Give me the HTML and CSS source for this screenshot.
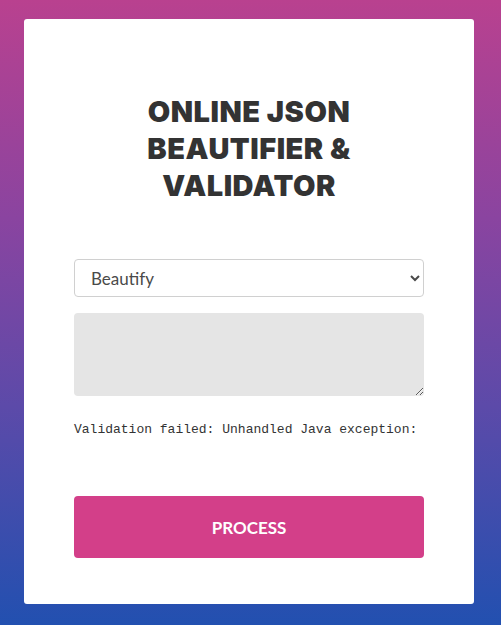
FILE: index.html
```html
<!DOCTYPE html>
<html>
<head>
<meta charset="utf-8">
<link rel="stylesheet" href="styles.css">
</head>
<body>
<main class="card">
  <h1 class="title">ONLINE JSON<br>BEAUTIFIER &amp;<br>VALIDATOR</h1>
  <select class="mode">
    <option>Beautify</option>
    <option>Validate</option>
  </select>
  <textarea class="input"></textarea>
  <p class="message">Validation failed: Unhandled Java exception:</p>
  <button class="process">PROCESS</button>
</main>
</body>
</html>
```
FILE: styles.css
```css
html, body {
  margin: 0;
  height: 625px;
}
body {
  background: linear-gradient(180deg, #b9418f 0%, #8a44a0 35%, #5c4aa9 65%, #2250b0 100%);
  padding: 19px 27px 21px 24px;
  box-sizing: border-box;
  font-family: "Inter", sans-serif;
}
.card {
  background: #fff;
  border-radius: 3px;
  height: 585px;
  box-sizing: border-box;
  padding: 74px 50px 46px;
  display: flex;
  flex-direction: column;
}
.title {
  margin: 0;
  text-align: center;
  font-family: "Inter", sans-serif;
  font-weight: 900;
  font-size: 29px;
  line-height: 37px;
  color: #333;
  letter-spacing: 0.5px;
}
.mode {
  margin-top: 55px;
  height: 38px;
  border: 1px solid #d0d0d0;
  border-radius: 4px;
  background: #fff;
  padding: 0 8px 0 12px;
  font-family: "Lato", sans-serif;
  font-size: 17px;
  color: #4a4a4a;
}
.input {
  margin-top: 16px;
  height: 83px;
  border: none;
  border-radius: 4px;
  background: #e5e5e5;
  box-sizing: border-box;
  padding: 8px;
  font-family: "Liberation Mono", monospace;
}
.message {
  margin: 24px 0 0;
  font-family: "Liberation Mono", monospace;
  font-size: 13px;
  line-height: 20px;
  color: #333;
}
.process {
  margin-top: 56px;
  height: 62px;
  border: none;
  border-radius: 4px;
  background: #d33f89;
  color: #fff;
  font-family: "Lato", sans-serif;
  font-weight: 700;
  font-size: 17px;
}
```
